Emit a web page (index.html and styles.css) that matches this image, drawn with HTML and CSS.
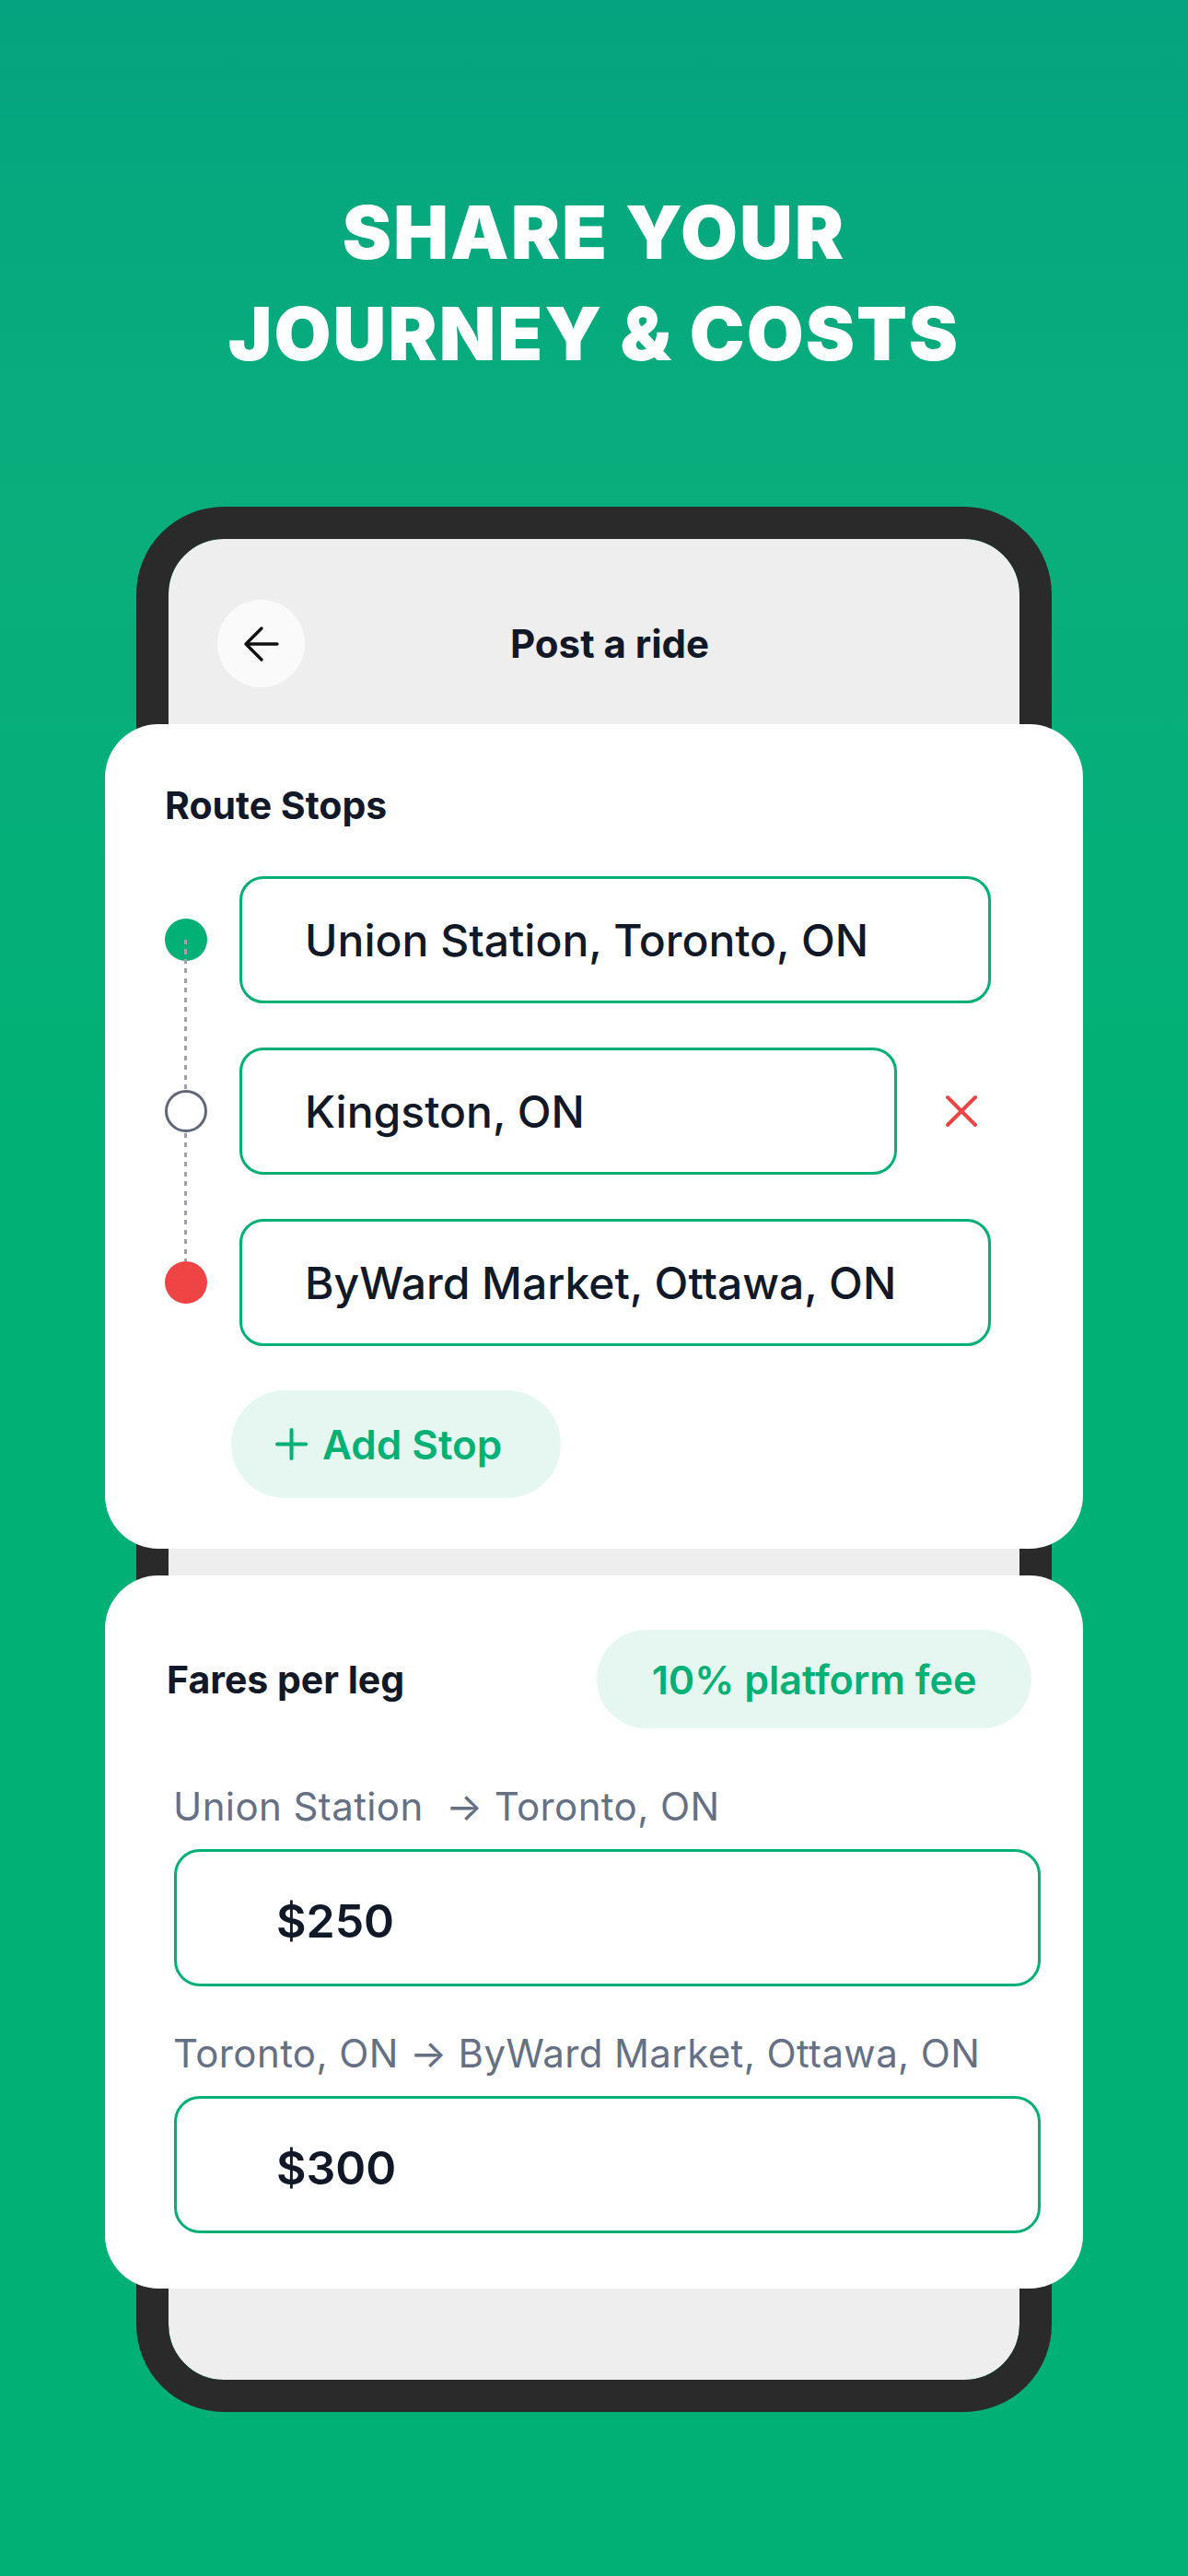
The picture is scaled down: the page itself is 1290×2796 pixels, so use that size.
FILE: index.html
```html
<!DOCTYPE html>
<html lang="en">
<head>
    <meta charset="UTF-8">
    <meta name="viewport" content="width=device-width, initial-scale=1.0">
    <title>Share your journey &amp; costs</title>
    <link rel="stylesheet" href="styles.css">
</head>
<body>

<div class="hero">SHARE YOUR<br>JOURNEY &amp; COSTS</div>

<div class="phone">
    <!-- Top bar -->
    <div class="topbar">
        <div class="back">
            <svg width="40" height="40" viewBox="0 0 40 40" fill="none" stroke="#111" stroke-width="3.4" stroke-linecap="round" stroke-linejoin="round">
                <path d="M20 3 L3 20 L20 37 M3 20 H37"/>
            </svg>
        </div>
        <h1>Post a ride</h1>
    </div>

    <!-- Route stops -->
    <div class="card route-card">
        <h2>Route Stops</h2>
        <div class="stops">
            <div class="stop">
                <span class="dot dot-start"></span>
                <div class="field">Union Station, Toronto, ON</div>
            </div>
            <div class="stop">
                <span class="dot dot-mid"></span>
                <div class="field">Kingston, ON</div>
                <svg class="remove" width="36" height="36" viewBox="0 0 36 36" stroke="#ef4444" stroke-width="4" stroke-linecap="round">
                    <path d="M3 3 L33 33 M33 3 L3 33"/>
                </svg>
            </div>
            <div class="stop">
                <span class="dot dot-end"></span>
                <div class="field">ByWard Market, Ottawa, ON</div>
            </div>
        </div>
        <button class="add-stop">
            <svg width="35" height="35" viewBox="0 0 35 35" stroke="#00b074" stroke-width="4" stroke-linecap="round">
                <path d="M17.5 2 V33 M2 17.5 H33"/>
            </svg>
            Add Stop
        </button>
    </div>

    <!-- Fares -->
    <div class="card fares-card">
        <div class="fares-head">
            <h2>Fares per leg</h2>
            <span class="fee">10% platform fee</span>
        </div>
        <div class="leg-label">Union Station&nbsp; → Toronto, ON</div>
        <div class="fare">$250</div>
        <div class="leg-label second">Toronto, ON → ByWard Market, Ottawa, ON</div>
        <div class="fare">$300</div>
    </div>
</div>

</body>
</html>
```

FILE: styles.css
```css
html, body {
    margin: 0;
    padding: 0;
}
body {
    font-family: Inter, "Noto Sans", sans-serif;
    background: linear-gradient(180deg, #03a47f 0%, #0aae7c 20%, #00b074 45%, #00b074 100%);
    width: 1290px;
    height: 2796px;
    overflow: hidden;
}
.hero {
    margin-top: 197px;
    text-align: center;
    color: white;
    font-size: 80px;
    font-weight: 900;
    line-height: 110px;
    letter-spacing: 2px;
}
.phone {
    box-sizing: border-box;
    width: 994px;
    height: 2068px;
    margin: 133px auto 0;
    border: 35px solid #2a2a2a;
    border-radius: 95px;
    background-color: #eeeeee;
    background-clip: padding-box;
}
.topbar {
    display: flex;
    align-items: center;
    padding: 66px 53px 40px;
}
.back {
    width: 95px;
    height: 95px;
    border-radius: 50%;
    background-color: #fafafa;
    display: flex;
    align-items: center;
    justify-content: center;
}
.topbar h1 {
    margin: 0 0 0 223px;
    font-size: 42px;
    font-weight: 700;
    color: #111827;
}
.card {
    background-color: white;
    border-radius: 58px;
    margin: 0 -69px;
}
.card h2 {
    margin: 0;
    font-size: 41px;
    line-height: 48px;
    font-weight: 700;
    color: #111827;
}
.route-card {
    padding: 64px 100px 55px 65px;
}
.stops {
    position: relative;
    display: flex;
    flex-direction: column;
    gap: 48px;
    margin-top: 53px;
}
.stops::before {
    content: "";
    position: absolute;
    left: 21px;
    top: 69px;
    width: 3px;
    height: 349px;
    background: repeating-linear-gradient(to bottom, #9ca3af 0 5px, transparent 5px 10.5px);
    z-index: 1;
}
.stop {
    display: flex;
    align-items: center;
}
.dot {
    flex: none;
    box-sizing: border-box;
    width: 46px;
    height: 46px;
    border-radius: 50%;
    margin-right: 35px;
}
.dot-start {
    background-color: #00b074;
}
.dot-mid {
    position: relative;
    z-index: 2;
    background-color: white;
    border: 3px solid #5f6679;
}
.dot-end {
    position: relative;
    z-index: 2;
    background-color: #ef4444;
}
.field {
    flex: 1;
    box-sizing: border-box;
    height: 138px;
    border: 3px solid #00b074;
    border-radius: 26px;
    display: flex;
    align-items: center;
    padding-left: 68px;
    font-size: 48px;
    font-weight: 500;
    color: #111827;
}
.remove {
    flex: none;
    margin: 0 14px 0 52px;
}
.add-stop {
    display: flex;
    align-items: center;
    gap: 16px;
    box-sizing: border-box;
    width: 358px;
    height: 117px;
    margin: 48px 0 0 72px;
    padding: 0 0 0 48px;
    border: none;
    border-radius: 59px;
    background-color: #e5f7f0;
    color: #00b074;
    font-family: Inter, sans-serif;
    font-size: 44px;
    font-weight: 600;
}
.fares-card {
    margin-top: 29px;
    padding: 59px 46px 60px 67px;
}
.fares-head {
    display: flex;
    align-items: center;
    justify-content: space-between;
    padding-right: 10px;
}
.fee {
    display: flex;
    align-items: center;
    justify-content: center;
    box-sizing: border-box;
    width: 472px;
    height: 107px;
    border-radius: 54px;
    background-color: #e5f7f0;
    color: #00b074;
    font-size: 43px;
    font-weight: 600;
}
.leg-label {
    margin: 60px 0 21px 7px;
    font-size: 42px;
    line-height: 50px;
    letter-spacing: 0.4px;
    color: #667085;
}
.leg-label.second {
    margin-top: 48px;
}
.fare {
    box-sizing: border-box;
    height: 149px;
    margin-left: 8px;
    border: 3px solid #00b074;
    border-radius: 28px;
    display: flex;
    align-items: center;
    padding: 6px 0 0 108px;
    font-size: 50px;
    font-weight: 600;
    color: #111827;
}
```
